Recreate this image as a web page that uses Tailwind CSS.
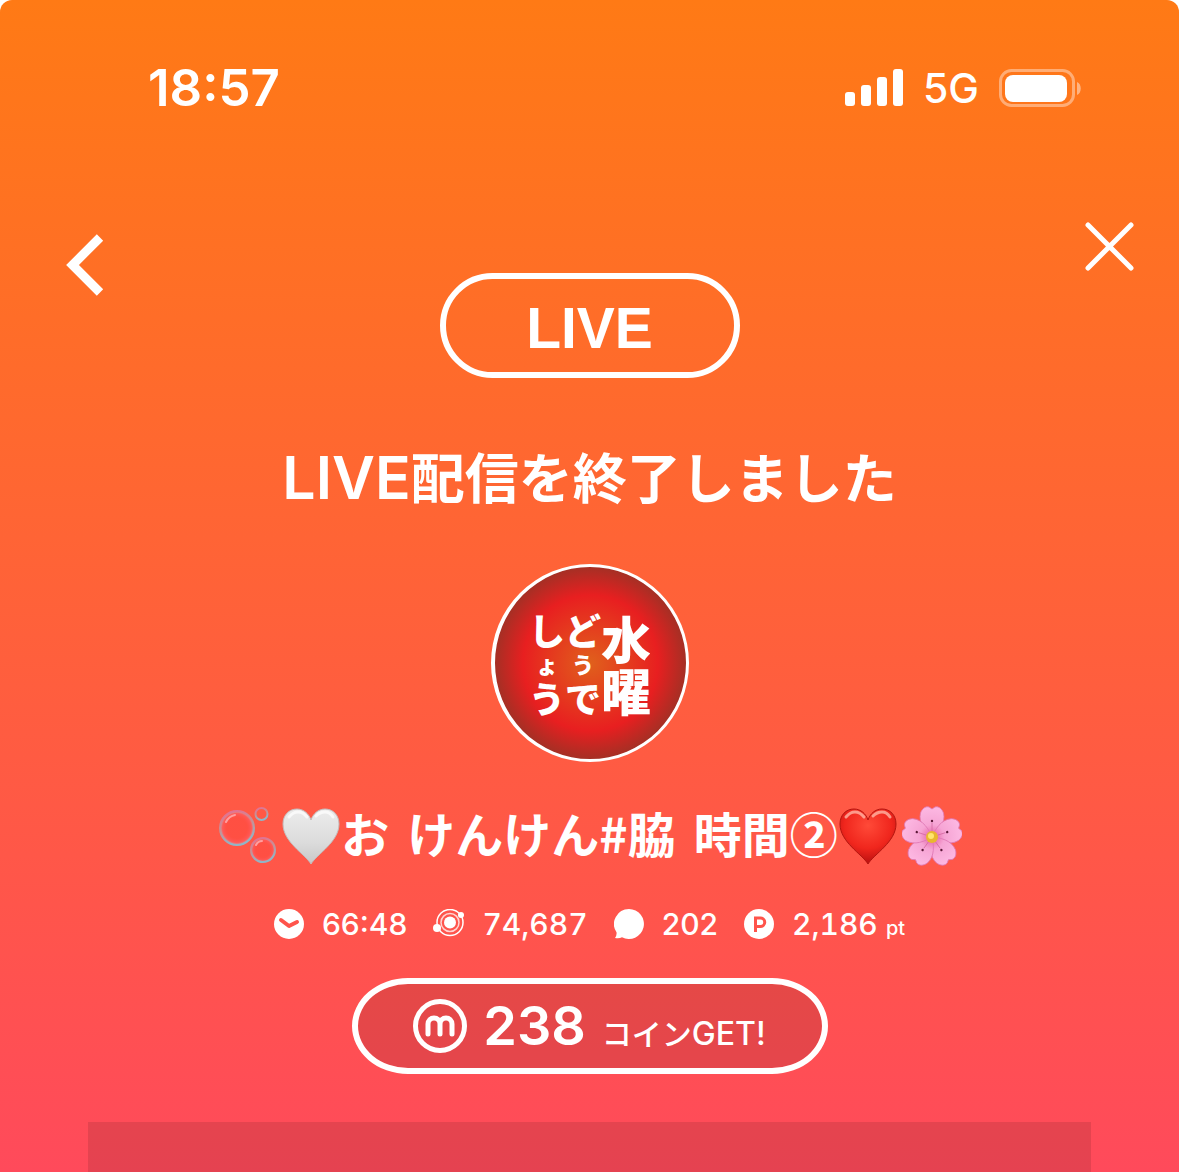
<!DOCTYPE html>
<html lang="ja">
  <head>
    <meta charset="UTF-8" />
    <meta name="viewport" content="width=device-width, initial-scale=1.0" />
    <title>LIVE配信を終了しました</title>
    <script src="https://cdn.jsdelivr.net/npm/@tailwindcss/browser@4"></script>
  </head>
  <body class="bg-white">
    <div
      class="min-h-screen flex flex-col rounded-t-xl bg-linear-to-b/srgb from-[#ff7a15] to-[#ff4a5b] text-white font-[Inter,'Noto_Sans_CJK_JP',sans-serif]"
    >
      <!-- status bar -->
      <div class="flex items-center justify-between pt-14 pl-37 pr-24">
        <p class="text-[51px] leading-16 font-semibold">18:57</p>
        <div class="flex items-center gap-5">
          <svg class="w-[58px] h-[38px]" viewBox="0 0 58 38" fill="white">
            <rect x="0" y="23" width="10" height="14" rx="3" />
            <rect x="16" y="16" width="10" height="21" rx="3" />
            <rect x="32" y="8" width="10" height="29" rx="3" />
            <rect x="48" y="0" width="10" height="37" rx="3" />
          </svg>
          <span class="text-[41px] leading-16 font-medium">5G</span>
          <svg class="w-[84px] h-[38px]" viewBox="0 0 84 38">
            <rect x="1.5" y="1.5" width="73" height="35" rx="11" fill="none" stroke="white" stroke-opacity=".4" stroke-width="3" />
            <rect x="6" y="6" width="62" height="27" rx="8" fill="white" />
            <path d="M78 13c5 2 5 11 0 13z" fill="white" fill-opacity=".45" />
          </svg>
        </div>
      </div>

      <!-- header -->
      <header class="mt-25 grid grid-cols-[1fr_auto_1fr] items-start pl-16 pr-11">
        <button type="button" aria-label="戻る" class="mt-3 w-16 cursor-pointer">
          <svg class="w-10 h-16" viewBox="0 0 40 64" fill="none" stroke="white" stroke-width="9">
            <path d="M36 5.500L8.500 33L36 60.500" />
          </svg>
        </button>
        <div class="mt-[53px] -ml-5 w-[300px] h-[105px] rounded-full border-6 flex items-center justify-center">
          <span class="pt-1 text-[57px] leading-16 font-bold font-['Liberation_Sans',sans-serif]">LIVE</span>
        </div>
        <button type="button" aria-label="閉じる" class="w-13 justify-self-end cursor-pointer">
          <svg class="w-13 h-13" viewBox="0 0 52 52" fill="none" stroke="white" stroke-width="5" stroke-linecap="round">
            <path d="M5 5L48 48M48 5L5 48" />
          </svg>
        </button>
      </header>

      <main class="flex-1 flex flex-col items-center">
        <h1 class="mt-15 text-[54px] leading-20 font-bold flex items-baseline">
          <span class="text-[59px] font-semibold">LIVE</span>配信を終了しました
        </h1>

        <!-- avatar -->
        <div
          class="mt-11 size-[198px] rounded-full border-3 border-l-4 flex items-center justify-center bg-radial/srgb from-[#e0601c] via-[#e81f20] via-50% to-[#8e3526] to-78% font-['Noto_Sans_CJK_JP',sans-serif] font-black"
        >
          <div class="flex flex-col items-center">
            <span class="text-[36px] leading-10">し</span>
            <span class="text-[22px] leading-7">ょ</span>
            <span class="text-[36px] leading-10">う</span>
          </div>
          <div class="flex flex-col items-center">
            <span class="text-[36px] leading-10">ど</span>
            <span class="text-[22px] leading-7">う</span>
            <span class="text-[36px] leading-10">で</span>
          </div>
          <div class="flex flex-col items-center">
            <span class="text-[50px] leading-13">水</span>
            <span class="text-[50px] leading-13">曜</span>
          </div>
        </div>

        <!-- stream title -->
        <div class="mt-[42px] h-16 flex items-center gap-1">
          <svg class="size-[60px]" viewBox="0 0 60 60" fill="none">
            <defs>
              <linearGradient id="rim" x1="0" y1="0" x2="0.300" y2="1">
                <stop offset="0" stop-color="#e96a92" />
                <stop offset=".5" stop-color="#c98f93" />
                <stop offset="1" stop-color="#8fb6c8" />
              </linearGradient>
              <radialGradient id="film">
                <stop offset=".6" stop-color="#ff4a40" stop-opacity=".6" />
                <stop offset=".85" stop-color="#ff5a58" />
                <stop offset="1" stop-color="#c9a0a8" />
              </radialGradient>
            </defs>
            <circle cx="20" cy="22" r="17" fill="url(#film)" stroke="url(#rim)" stroke-width="2" />
            <circle cx="46" cy="44" r="12" fill="url(#film)" stroke="url(#rim)" stroke-width="2" />
            <circle cx="44.500" cy="8" r="6" stroke="url(#rim)" stroke-width="2" />
            <path d="M9 16q3-6 9-7M39 39q2-4 6-4" stroke="#ff9f9f" stroke-width="2" stroke-linecap="round" />
          </svg>
          <svg class="size-[60px]" viewBox="0 0 60 60">
            <defs>
              <linearGradient id="silver" x1="0" y1="0" x2="0" y2="1">
                <stop offset="0" stop-color="#ececec" />
                <stop offset=".6" stop-color="#dcdcdc" />
                <stop offset="1" stop-color="#c8c8c8" />
              </linearGradient>
            </defs>
            <path d="M30 58C24 48 2 36 2 18C2 9 8 3 16 3C23 3 28 8 30 14C32 8 37 3 44 3C52 3 58 9 58 18C58 36 36 48 30 58Z" fill="url(#silver)" stroke="#c4bcbc" />
            <path d="M8 11q4-5 9-5t9 5M35 10q4-4 9-4t8 5" fill="none" stroke="white" stroke-width="3" stroke-linecap="round" opacity=".7" />
          </svg>
          <h2 class="-mx-1 pb-2 flex gap-[18px] text-[48px] leading-16 font-bold font-['Noto_Sans_CJK_JP',sans-serif]">
            <span>お</span><span>けんけん#脇</span><span>時間②</span>
          </h2>
          <svg class="size-[60px]" viewBox="0 0 60 60">
            <defs>
              <radialGradient id="ruby" cx=".5" cy=".3" r=".7">
                <stop offset="0" stop-color="#ff4a38" />
                <stop offset=".6" stop-color="#f0261d" />
                <stop offset="1" stop-color="#b80f10" />
              </radialGradient>
            </defs>
            <path d="M30 58C24 48 2 36 2 18C2 9 8 3 16 3C23 3 28 8 30 14C32 8 37 3 44 3C52 3 58 9 58 18C58 36 36 48 30 58Z" fill="url(#ruby)" stroke="#b3150f" />
            <path d="M8 11q4-5 9-5t9 5M35 10q4-4 9-4t8 5" fill="none" stroke="#ffb5a5" stroke-width="3" stroke-linecap="round" opacity=".8" />
          </svg>
          <svg class="size-[60px]" viewBox="0 0 60 60">
            <defs>
              <radialGradient id="petals" gradientUnits="userSpaceOnUse" cx="30" cy="31" r="31">
                <stop offset="0" stop-color="#e25ba0" />
                <stop offset=".4" stop-color="#f6a4d4" />
                <stop offset="1" stop-color="#fdb9e3" />
              </radialGradient>
              <g id="petal">
                <path d="M30 31C24 26 16 17 18.500 7C20 3 23 0 27 1L30 3L33 1C37 0 40 3 41.500 7C44 17 36 26 30 31Z" fill="url(#petals)" stroke="#df78b5" stroke-width=".8" />
                <path d="M30 25V17" stroke="#d56aa3" stroke-width=".8" />
                <circle cx="30" cy="15" r="1.200" fill="#5b1838" />
              </g>
            </defs>
            <use href="#petal" />
            <use href="#petal" transform="rotate(72 30 31)" />
            <use href="#petal" transform="rotate(144 30 31)" />
            <use href="#petal" transform="rotate(216 30 31)" />
            <use href="#petal" transform="rotate(288 30 31)" />
            <circle cx="30" cy="31" r="6" fill="#e9b72f" />
            <circle cx="29" cy="30" r="3" fill="#ffe56e" />
          </svg>
        </div>

        <!-- stats -->
        <ul class="mt-9 flex items-center gap-[26px] text-[30px] leading-10 font-medium">
          <li class="flex items-center gap-[18px]">
            <svg class="size-[30px]" viewBox="0 0 30 30">
              <circle cx="15" cy="15" r="15" fill="white" />
              <path d="M7 11l8 6 8-4" fill="none" stroke="#ff544b" stroke-width="4" stroke-linecap="round" stroke-linejoin="round" />
            </svg>
            66:48
          </li>
          <li class="flex items-center gap-[18px]">
            <svg class="w-[31px] h-[30px]" viewBox="0 0 31 30" fill="none" stroke="white">
              <circle cx="17" cy="13.500" r="13" stroke-width="1.500" />
              <circle cx="17" cy="13.500" r="9" stroke-width="1.500" opacity=".75" />
              <circle cx="17" cy="13.500" r="6" fill="white" stroke="none" />
              <circle cx="4" cy="19" r="4" fill="white" stroke="none" />
              <circle cx="28" cy="6" r="3" fill="white" stroke="none" />
            </svg>
            <span class="tabular-nums">74,687</span>
          </li>
          <li class="flex items-center gap-[18px]">
            <svg class="size-[30px]" viewBox="0 0 30 30" fill="white">
              <path d="M15 0a15 15 0 1 1-7 28.300Q5 30 1 29Q3 26 2.500 23.300A15 15 0 0 1 15 0Z" />
            </svg>
            202
          </li>
          <li class="flex items-center gap-[18px]">
            <svg class="size-[30px]" viewBox="0 0 30 30">
              <circle cx="15" cy="15" r="15" fill="white" />
              <path d="M11.500 23V9H16.500a4 4 0 0 1 0 8.500H12" fill="none" stroke="#ff544b" stroke-width="3" />
            </svg>
            <span class="tabular-nums">2,186 <small class="text-xl">pt</small></span>
          </li>
        </ul>

        <!-- coins -->
        <div class="mt-[34px] w-[476px] h-24 rounded-[56px/48px] border-6 bg-black/10 bg-clip-padding flex items-center justify-center gap-4">
          <svg class="size-[54px]" viewBox="0 0 54 54" fill="none" stroke="white">
            <circle cx="27" cy="27" r="24.500" stroke-width="5" />
            <path d="M15 35V25a6 6 0 0 1 12 0V35M27 25a6 6 0 0 1 12 0V35" stroke-width="5" stroke-linecap="round" />
          </svg>
          <p class="flex items-baseline gap-4">
            <span class="text-[54px] leading-16 font-semibold">238</span>
            <span class="text-[30px] font-medium">コイン<span class="text-[32px]">GET!</span></span>
          </p>
        </div>

        <div class="mt-12 flex-1 self-stretch mx-22 bg-black/10"></div>
      </main>
    </div>
  </body>
</html>
